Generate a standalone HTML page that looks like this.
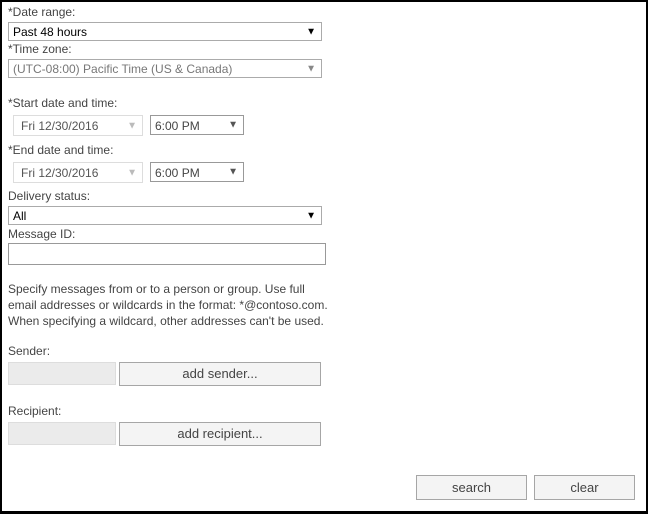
<!DOCTYPE html>
<html><head><style>
body{margin:0;width:648px;height:514px;background:#fff;font-family:"Liberation Sans",sans-serif;font-size:12px;color:#333;position:relative;overflow:hidden}
.frame{position:absolute;left:0;top:0;width:644px;height:509px;border:2px solid #000;border-bottom-width:3px}
.a{position:absolute;white-space:nowrap}
.lbl{color:#444;font-size:12px}
.box{position:absolute;box-sizing:border-box;border:1px solid #ababab;background:#fff}
.arr{position:absolute;right:5px;top:50%;transform:translateY(-50%);font-size:10px}
.btn{position:absolute;box-sizing:border-box;border:1px solid #a6a6a6;background:#f4f4f4;text-align:center;color:#444;font-size:13px}
.gbox{position:absolute;box-sizing:border-box;border:1px solid #ddd;background:#ebebeb}
</style></head><body>
<div class="frame"></div>
<div class="a lbl" style="left:8px;top:5px">*Date range:</div>
<div class="box" style="left:8px;top:22px;width:314px;height:19px"><span class="a" style="left:4px;top:2px;color:#000">Past 48 hours</span><span class="arr" style="color:#000">▼</span></div>
<div class="a lbl" style="left:8px;top:42px">*Time zone:</div>
<div class="box" style="left:8px;top:59px;width:314px;height:19px"><span class="a" style="left:4px;top:2px;color:#777">(UTC-08:00) Pacific Time (US &amp; Canada)</span><span class="arr" style="color:#888">▼</span></div>
<div class="a lbl" style="left:8px;top:96px">*Start date and time:</div>
<div class="box" style="left:13px;top:115px;width:130px;height:21px;border-color:#ddd"><span class="a" style="left:7px;top:3px;color:#555">Fri 12/30/2016</span><span class="arr" style="color:#bbb">▼</span></div>
<div class="box" style="left:150px;top:115px;width:94px;height:20px;border-color:#999"><span class="a" style="left:4px;top:3px;color:#444">6:00 PM</span><span class="arr" style="color:#555">▼</span></div>
<div class="a lbl" style="left:8px;top:143px">*End date and time:</div>
<div class="box" style="left:13px;top:162px;width:130px;height:21px;border-color:#ddd"><span class="a" style="left:7px;top:3px;color:#555">Fri 12/30/2016</span><span class="arr" style="color:#bbb">▼</span></div>
<div class="box" style="left:150px;top:162px;width:94px;height:20px;border-color:#999"><span class="a" style="left:4px;top:3px;color:#444">6:00 PM</span><span class="arr" style="color:#555">▼</span></div>
<div class="a lbl" style="left:8px;top:189px">Delivery status:</div>
<div class="box" style="left:8px;top:206px;width:314px;height:19px"><span class="a" style="left:4px;top:2px;color:#000">All</span><span class="arr" style="color:#000">▼</span></div>
<div class="a lbl" style="left:8px;top:227px">Message ID:</div>
<div class="box" style="left:8px;top:243px;width:318px;height:22px;border-color:#999"></div>
<div class="a lbl" style="left:8px;top:281px;line-height:16px">Specify messages from or to a person or group. Use full<br>email addresses or wildcards in the format: *@contoso.com.<br>When specifying a wildcard, other addresses can't be used.</div>
<div class="a lbl" style="left:8px;top:344px">Sender:</div>
<div class="gbox" style="left:8px;top:362px;width:108px;height:23px"></div>
<div class="btn" style="left:119px;top:362px;width:202px;height:24px;line-height:22px">add sender...</div>
<div class="a lbl" style="left:8px;top:404px">Recipient:</div>
<div class="gbox" style="left:8px;top:422px;width:108px;height:23px"></div>
<div class="btn" style="left:119px;top:422px;width:202px;height:24px;line-height:22px">add recipient...</div>
<div class="btn" style="left:416px;top:475px;width:111px;height:25px;line-height:23px">search</div>
<div class="btn" style="left:534px;top:475px;width:101px;height:25px;line-height:23px">clear</div>
</body></html>
